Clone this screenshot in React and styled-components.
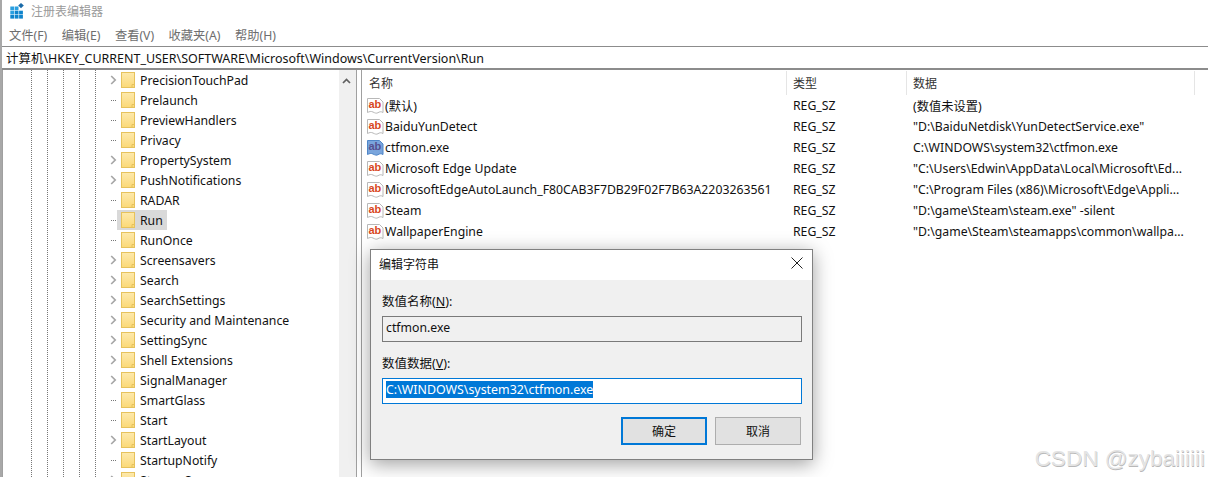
import React from "react";
import styled, { createGlobalStyle } from "styled-components";

const Global = createGlobalStyle`
  html, body { margin: 0; padding: 0; background: #fff; }
  * { box-sizing: border-box; }
  body { font-family: "Noto Sans", "Noto Sans CJK SC", sans-serif; font-size: 12.25px; color: #111; }
`;

const Win = styled.div`
  position: relative; width: 1208px; height: 477px; overflow: hidden;
  display: flex; flex-direction: column; background: #fff;
  border-left: 2px solid #a8a8a8;
`;
const TitleBar = styled.div`
  height: 22px; display: flex; align-items: center; padding: 0 0 0 8px; gap: 7px;
  color: #9a9a9a; font-size: 12px; font-family: "Noto Sans CJK SC", sans-serif;
`;
const TitleText = styled.span`margin-top: -2px;`;
const MenuBar = styled.div`
  height: 24px; display: flex; align-items: center; padding: 2px 0 0 7px; gap: 14.5px;
  color: #6e6e6e; font-size: 12.25px;
`;
const Address = styled.div`
  height: 24px; display: flex; align-items: center; padding-left: 4px;
  border-top: 1px solid #8c8c8c; border-bottom: 2px solid #8c8c8c;
  white-space: nowrap; font-size: 12.48px;
`;
const Panes = styled.div`flex: 1; display: flex; min-height: 0;`;
const TreePane = styled.div`
  width: 355px; display: flex; border-right: 1px solid #a0a0a0;
  border-left: 1px solid #a0a0a0; position: relative;
`;
const TreeList = styled.div`
  flex: 1; min-width: 0; overflow: hidden;
  background-image:
    linear-gradient(#777 50%, transparent 50%), linear-gradient(#777 50%, transparent 50%),
    linear-gradient(#777 50%, transparent 50%), linear-gradient(#777 50%, transparent 50%),
    linear-gradient(#777 50%, transparent 50%);
  background-size: 1px 2px;
  background-repeat: repeat-y;
  background-position: 28px 0, 44px 0, 60px 0, 76px 0, 92px 0;
`;
const ScrollTrack = styled.div`
  width: 17px; flex: none; background: #f0f0f0; display: flex; justify-content: center; align-items: flex-start;
  padding: 8px 2px 0 0;
`;
const Row = styled.div`
  height: 20px; display: flex; align-items: center; padding-left: 103px; white-space: nowrap;
`;
const Expander = styled.span`
  width: 15px; height: 20px; display: flex; align-items: center; justify-content: center; flex: none;
`;
const Dots = styled.span`
  width: 5px; height: 1px; margin-right: 5px; margin-left: 5px; flex: none;
  background-image: linear-gradient(90deg, #777 50%, transparent 50%);
  background-size: 2px 1px;
`;
const RowBody = styled.span`
  display: flex; align-items: center; height: 20px; gap: 5px; padding: 0 4px;
  margin-left: -4px; background: ${p => (p.$selected ? "#d9d9d9" : "transparent")};
`;
const Gutter = styled.div`width: 4px; flex: none;`;
const ListPane = styled.div`
  flex: 1; min-width: 0; border-left: 1px solid #a0a0a0; display: flex; flex-direction: column;
`;
const Grid = styled.div`
  display: grid; grid-template-columns: 425px 120px 288px;
`;
const HeadRow = styled(Grid)`height: 25px; padding-top: 1px;`;
const HeadCell = styled.div`
  border-right: 1px solid #e5e5e5; padding: 0 0 2px 6px; height: 24px; color: #333;
  display: flex; align-items: center;
  font-family: "Noto Sans CJK SC", sans-serif; font-size: 12px;
  &:first-child { padding-left: 7px; }
`;
const ListRow = styled(Grid)`height: 21px; align-items: center; white-space: nowrap;`;
const NameCell = styled.div`display: flex; align-items: center; gap: 1px; padding-left: 5px;`;
const Cell = styled.div`padding-left: 6px; overflow: hidden;`;

const Dialog = styled.div`
  position: absolute; left: 368px; top: 249px; width: 443px; height: 211px;
  background: #f0f0f0; border: 1px solid #808080; box-shadow: 0 4px 18px rgba(0,0,0,.38);
  display: flex; flex-direction: column;
`;
const DialogTitle = styled.div`
  height: 30px; background: #fff; display: flex; align-items: center; justify-content: space-between;
  padding: 0 9px 4px 8px; font-size: 12px; font-family: "Noto Sans CJK SC", sans-serif; flex: none;
`;
const DialogBody = styled.div`padding: 9px 10px 0 11px; display: flex; flex-direction: column;`;
const Label = styled.div`
  height: 24px; display: flex; align-items: center; padding-bottom: 2px; font-size: 12.5px;
  u { text-underline-offset: 1px; }
`;
const Field = styled.div`
  height: 26px; display: flex; align-items: center; padding: 0 0 3px 3px; margin-top: 3px; margin-bottom: 9px;
  background: ${p => (p.$active ? "#fff" : "#f0f0f0")};
  border: 1px solid ${p => (p.$active ? "#0078d7" : "#7a7a7a")};
`;
const Selected = styled.span`background: #0078d7; color: #fff; line-height: 17px; height: 17px; display: block; font-size: 12.4px;`;
const Buttons = styled.div`display: flex; justify-content: flex-end; gap: 8px; margin-top: 4px; padding-right: 1px;`;
const Btn = styled.div`
  width: 86px; height: 28px; display: flex; align-items: center; justify-content: center; padding-bottom: 1px;
  background: #e1e1e1; font-size: 12px; font-family: "Noto Sans CJK SC", sans-serif;
  border: ${p => (p.$primary ? "2px solid #0078d7" : "1px solid #adadad")};
`;
const Watermark = styled.div`
  position: absolute; right: 3px; bottom: 5px; font-family: "Liberation Sans", sans-serif;
  font-size: 22.5px; color: #e4e4e4; text-shadow: .5px .5px .6px #b8b8b8; white-space: nowrap;
`;

const AppIcon = () => (
  <svg width="14" height="16" viewBox="0 0 14 16" style={{ flex: "none" }}>
    {[0, 1, 2].flatMap(r => [0, 1, 2].map(c => (
      <rect key={`${r}${c}`} x={c * 4.4 + .3} y={r * 4.2 + 3.500} width="3.800" height="3.700" fill={r === 0 && c === 2 ? "#fff" : r + c < 2 ? "#2a9fe0" : "#0f84cc"} />
    )))}
    <path d="M11 0l2.800 2.600L11 5.200 8.200 2.600z" fill="#1a6aa8" />
  </svg>
);
const Chevron = () => (
  <svg width="7" height="10" viewBox="0 0 7 10"><path d="M1.200 1l4 4-4 4" fill="none" stroke="#a6a6a6" strokeWidth="1.700" /></svg>
);
const Folder = () => (
  <svg width="14" height="16" viewBox="0 0 14 16" style={{ flex: "none" }}>
    <defs>
      <linearGradient id="fg" x1="0" y1="0" x2="0" y2="1"><stop offset="0" stopColor="#fde9ad" /><stop offset="1" stopColor="#fbd977" /></linearGradient>
    </defs>
    <rect x=".5" y=".5" width="13" height="15" fill="url(#fg)" stroke="#e6c25c" />
    <path d="M11 15.500v-3h2.500" fill="none" stroke="#e6c25c" />
  </svg>
);
const ValueIcon = ({ selected }) => (
  <svg width="17" height="16" viewBox="0 0 17 16" style={{ flex: "none" }}>
    <path d="M.5.500h12l3.500 3.500v10.500c-2-1.200-3.500-.8-5 .2s-3 .3-5-.7-3.500-.5-5.500.5z" fill={selected ? "#7aa5dc" : "#fff"} stroke={selected ? "#4f86c8" : "#b8b8b8"} />
    <text x="7.800" y="10" textAnchor="middle" fontFamily="Liberation Sans, sans-serif" fontWeight="700" fontSize="11" fill={selected ? "#56508f" : "#d8481f"}>ab</text>
  </svg>
);
const Close = () => (
  <svg width="12" height="12" viewBox="0 0 12 12"><path d="M.5.500l11 11M11.500.500l-11 11" stroke="#222" strokeWidth="1" /></svg>
);
const Up = () => (
  <svg width="9" height="6" viewBox="0 0 9 6"><path d="M1 5l3.500-3.500L8 5" fill="none" stroke="#606060" strokeWidth="1.700" /></svg>
);

const tree = [
  ["PrecisionTouchPad", 1], ["Prelaunch", 0], ["PreviewHandlers", 0], ["Privacy", 0], ["PropertySystem", 1],
  ["PushNotifications", 1], ["RADAR", 0], ["Run", 0, 1], ["RunOnce", 0], ["Screensavers", 1], ["Search", 1],
  ["SearchSettings", 1], ["Security and Maintenance", 1], ["SettingSync", 1], ["Shell Extensions", 1],
  ["SignalManager", 1], ["SmartGlass", 0], ["Start", 0], ["StartLayout", 1], ["StartupNotify", 0], ["StorageSense", 1],
];
const values = [
  ["(默认)", "(数值未设置)"],
  ["BaiduYunDetect", '"D:\\BaiduNetdisk\\YunDetectService.exe"'],
  ["ctfmon.exe", "C:\\WINDOWS\\system32\\ctfmon.exe", 1],
  ["Microsoft Edge Update", '"C:\\Users\\Edwin\\AppData\\Local\\Microsoft\\Ed...'],
  ["MicrosoftEdgeAutoLaunch_F80CAB3F7DB29F02F7B63A2203263561", '"C:\\Program Files (x86)\\Microsoft\\Edge\\Appli...'],
  ["Steam", '"D:\\game\\Steam\\steam.exe" -silent'],
  ["WallpaperEngine", '"D:\\game\\Steam\\steamapps\\common\\wallpa...'],
];

export default function App() {
  return (
    <Win>
      <Global />
      <TitleBar><AppIcon /><TitleText>注册表编辑器</TitleText></TitleBar>
      <MenuBar>
        <span>文件(F)</span><span>编辑(E)</span><span>查看(V)</span><span>收藏夹(A)</span><span>帮助(H)</span>
      </MenuBar>
      <Address>计算机\HKEY_CURRENT_USER\SOFTWARE\Microsoft\Windows\CurrentVersion\Run</Address>
      <Panes>
        <TreePane>
          <TreeList>
            {tree.map(([name, chev, sel]) => (
              <Row key={name}>
                {chev ? <Expander><Chevron /></Expander> : <Dots />}
                <RowBody $selected={sel}><Folder />{name}</RowBody>
              </Row>
            ))}
          </TreeList>
          <ScrollTrack><Up /></ScrollTrack>
        </TreePane>
        <Gutter />
        <ListPane>
          <HeadRow>
            <HeadCell>名称</HeadCell><HeadCell>类型</HeadCell><HeadCell>数据</HeadCell>
          </HeadRow>
          {values.map(([name, data, sel]) => (
            <ListRow key={name}>
              <NameCell><ValueIcon selected={sel} />{name}</NameCell>
              <Cell>REG_SZ</Cell>
              <Cell>{data}</Cell>
            </ListRow>
          ))}
        </ListPane>
      </Panes>
      <Dialog>
        <DialogTitle>编辑字符串<Close /></DialogTitle>
        <DialogBody>
          <Label><span>数值名称(<u>N</u>):</span></Label>
          <Field>ctfmon.exe</Field>
          <Label><span>数值数据(<u>V</u>):</span></Label>
          <Field $active><Selected>C:\WINDOWS\system32\ctfmon.exe</Selected></Field>
          <Buttons><Btn $primary>确定</Btn><Btn>取消</Btn></Buttons>
        </DialogBody>
      </Dialog>
      <Watermark>CSDN @zybaiiiiii</Watermark>
    </Win>
  );
}
